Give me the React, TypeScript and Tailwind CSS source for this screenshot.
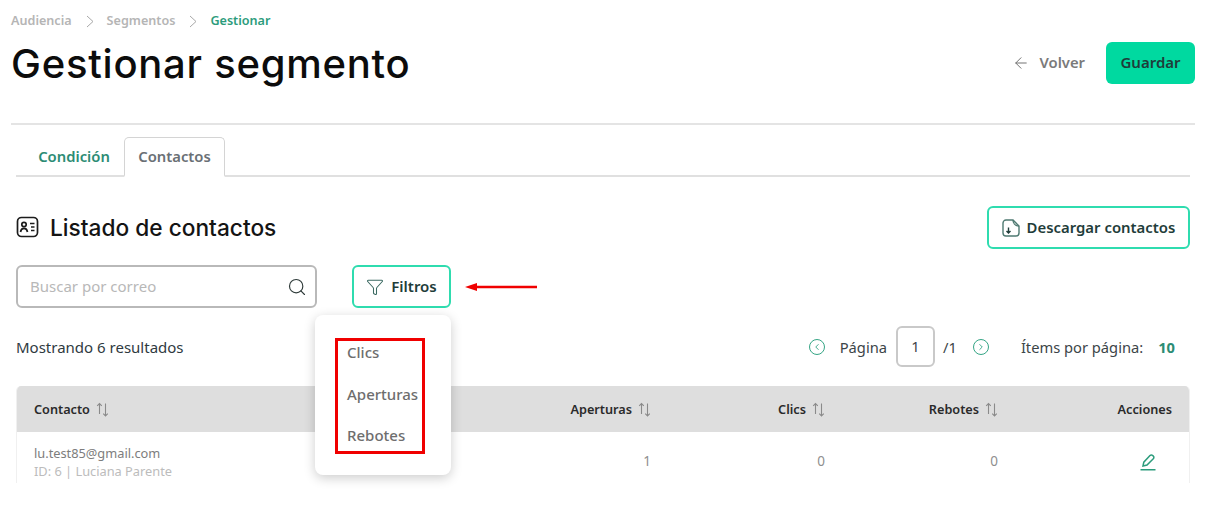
import * as React from "react";
import { ArrowLeft, ChevronLeft, ChevronRight, Funnel, Search } from "lucide-react";

const BODY = "font-['Noto_Sans','Open_Sans',sans-serif]";
const HEADING = "font-['Inter','Lato',sans-serif]";
const OUTLINE =
  "flex h-[43px] items-center justify-center rounded-[6px] border-2 border-[#2fdcaf] bg-white font-semibold text-[#1f3d3a]";
const TABLE_COLS = "grid grid-cols-[443px_174px_174px_173px_174px] items-center pl-[17px]";

function SortIcon(): React.JSX.Element {
  return (
    <svg width="13" height="15" viewBox="0 0 13 15" fill="none" stroke="#8a8a8a" strokeWidth="1.1" className="ml-[6px]">
      <path d="M3.500 12V1.500M1.200 3.800 3.500 1.500 5.800 3.800" />
      <path d="M9.500 1.500V14M7.200 11.700 9.500 14l2.300-2.300" />
    </svg>
  );
}

function Crumb(): React.JSX.Element {
  return (
    <svg width="8" height="13" viewBox="0 0 8 13" fill="none" stroke="#a8a8a8" strokeWidth="1" className="ml-[14px] mr-[13px]">
      <path d="M1 1l6 5.500L1 12" />
    </svg>
  );
}

function ContactCardIcon(): React.JSX.Element {
  return (
    <svg width="23" height="22" viewBox="0 0 23 22" fill="none" stroke="#1c1c1c" strokeWidth="1.7">
      <rect x="1.500" y="1.500" width="20" height="19" rx="4" />
      <circle cx="8" cy="8.500" r="2.200" />
      <path d="M4.500 16c.4-2.400 1.800-3.600 3.500-3.600s3.100 1.200 3.500 3.600" />
      <path d="M14 7.500h4.500M15 11h3.500M15 14.500h3.500" />
    </svg>
  );
}

function FileDownloadIcon(): React.JSX.Element {
  return (
    <svg width="18" height="18" viewBox="0 0 18 18" fill="none" stroke="#4f7a72" strokeWidth="1.400">
      <path d="M11 1H4a3 3 0 0 0-3 3v10a3 3 0 0 0 3 3h10a3 3 0 0 0 3-3V7z" />
      <path d="M11 1c0 3 2 6 6 6" />
      <path d="M6.500 8.500v5M4.500 12l2 2 2-2" stroke="#1f3d3a" />
    </svg>
  );
}

function EditIcon(): React.JSX.Element {
  return (
    <svg width="16" height="18" viewBox="0 0 16 18" fill="none" stroke="#2c9c7c" strokeWidth="1.500">
      <path d="M3 13 3.800 9.200 10 2.500a1.900 1.900 0 0 1 2.700 0l.6.6a1.900 1.900 0 0 1 0 2.700L7 12.100z" />
      <path d="M0.500 16.800h15" />
    </svg>
  );
}

function CirclePager({ dir }: { dir: "left" | "right" }): React.JSX.Element {
  return (
    <span className="flex h-[16px] w-[16px] items-center justify-center rounded-full border-[1.5px] border-[#35a585] text-[#35a585]">
      {dir === "left" ? <ChevronLeft size={10} strokeWidth={2.2} /> : <ChevronRight size={10} strokeWidth={2.2} />}
    </span>
  );
}

function HeaderCell({ label, className = "" }: { label: string; className?: string }): React.JSX.Element {
  return (
    <div className={`flex items-center text-[12.700px] font-semibold text-[#2a2a2a] ${className}`}>
      {label}
      <SortIcon />
    </div>
  );
}

function ValueCell({ value }: { value: number }): React.JSX.Element {
  return <div className="text-right text-[13.500px] text-[#8f8f8f]">{value}</div>;
}

export default function App(): React.JSX.Element {
  return (
    <div className={`${BODY} relative h-[513px] w-[1207px] overflow-hidden bg-white pl-[11px] pr-[12px]`}>
      <nav className="mt-[13px] flex h-[16px] items-center text-[12.600px] font-semibold leading-none">
        <span className="text-[#b5b5b5]">Audiencia</span>
        <Crumb />
        <span className="text-[#b5b5b5]">Segmentos</span>
        <Crumb />
        <span className="text-[#2c9c7c]">Gestionar</span>
      </nav>

      <header className="mt-[13px] flex h-[42px] items-center justify-between">
        <h1 className={`${HEADING} pt-[2px] text-[40px] font-medium leading-none tracking-[0.75px] text-[#0c0c0c]`}>
          Gestionar segmento
        </h1>
        <div className="flex items-center">
          <ArrowLeft size={18} strokeWidth={1.300} className="text-[#6f6f6f]" />
          <span className="ml-[9px] pb-[2px] text-[14.800px] font-semibold text-[#7a7a7a]">Volver</span>
          <button className="ml-[21px] h-[42px] w-[89px] rounded-[6px] bg-[#00d9a0] pb-[2px] text-[15px] font-semibold text-[#1f3d3a]">
            Guardar
          </button>
        </div>
      </header>

      <div className="mt-[39px] h-[2px] bg-[#e4e4e4]" />

      <div className="mx-[5px] mt-[12px] flex h-[40px] items-end border-b-2 border-[#e0e0e0]">
        <span className="mb-[-2px] flex h-[39px] w-[108px] items-center justify-center pb-[2px] pl-[8px] text-[14.800px] font-semibold text-[#2c8c74]">
          Condición
        </span>
        <span className="mb-[-2px] flex h-[40px] w-[101px] items-center justify-center rounded-t-[5px] border border-b-2 border-[#d4d4d4] border-b-white bg-white text-[14.800px] font-semibold text-[#6a7075]">
          Contactos
        </span>
      </div>

      <div className="mx-[5px]">
        <section className="mt-[29px] flex h-[43px] items-center justify-between">
          <div className="flex items-center">
            <ContactCardIcon />
            <h2 className={`${HEADING} ml-[11px] pt-[2px] text-[22.700px] font-medium leading-none text-[#141414]`}>
              Listado de contactos
            </h2>
          </div>
          <button className={`${OUTLINE} w-[203px] gap-[7px] text-[14.900px]`}>
            <FileDownloadIcon />
            Descargar contactos
          </button>
        </section>

        <div className="mt-[16px] flex items-center">
          <div className="flex h-[43px] w-[301px] items-center justify-between rounded-[6px] border-2 border-[#b9b9b9] pl-[12px] pr-[8px]">
            <span className="text-[15px] text-[#b8b8b8]">Buscar por correo</span>
            <Search size={20} strokeWidth={1.400} className="text-[#2f3b3a]" />
          </div>
          <button className={`${OUTLINE} ml-[35px] w-[99px] gap-[7px] text-[15px]`}>
            <Funnel size={18} strokeWidth={1.400} className="text-[#3b6a62]" />
            Filtros
          </button>
          <svg width="72" height="10" viewBox="0 0 72 10" className="ml-[14px]">
            <path d="M0 5 12 1v2.800h60v2.400H12V9z" fill="#f00000" />
          </svg>
        </div>

        <div className="mt-[18px] flex h-[41px] items-center justify-between pr-[15px]">
          <span className="pt-[1px] text-[15px] text-[#2f3a3f]">Mostrando 6 resultados</span>
          <div className="flex items-center text-[14.700px] text-[#3c4548]">
            <CirclePager dir="left" />
            <span className="ml-[15px] pt-[1px]">Página</span>
            <span className="ml-[9px] flex h-[41px] w-[39px] items-center justify-center rounded-[6px] border-2 border-[#c9c9c9]">
              1
            </span>
            <span className="ml-[8px] pt-[1px]">/1</span>
            <span className="ml-[16px]"><CirclePager dir="right" /></span>
            <span className="ml-[32px] pt-[1px]">Ítems por página:</span>
            <span className="ml-[15px] pt-[1px] font-bold text-[#2c8c74]">10</span>
          </div>
        </div>

        <div className="mt-[19px] h-[97px] overflow-hidden rounded-t-[5px] border-x border-[#f0f0f0]">
          <div className={`${TABLE_COLS} h-[46px] bg-[#dedede] pt-[1px]`}>
            <HeaderCell label="Contacto" />
            <HeaderCell label="Aperturas" className="justify-end" />
            <HeaderCell label="Clics" className="justify-end" />
            <HeaderCell label="Rebotes" className="justify-end" />
            <div className="text-right text-[12.700px] font-semibold text-[#2a2a2a]">Acciones</div>
          </div>
          <div className={`${TABLE_COLS} h-[51px] pt-[8px]`}>
            <div className="text-[12.800px] leading-[18px]">
              <div className="text-[#7d7d7d]">lu.test85@gmail.com</div>
              <div className="text-[#bcbcbc]">ID: 6 | Luciana Parente</div>
            </div>
            <ValueCell value={1} />
            <ValueCell value={0} />
            <ValueCell value={0} />
            <div className="flex justify-end pr-[16px]">
              <EditIcon />
            </div>
          </div>
        </div>
      </div>

      <div className="absolute left-[315px] top-[315px] h-[160px] w-[136px] rounded-[8px] bg-white shadow-[0_3px_12px_rgba(0,0,0,0.2)]">
        <div className="absolute left-[20px] top-[23px] flex h-[116px] w-[90px] flex-col border-[3px] border-[#f00000] pl-[9px] text-[15px] font-medium leading-[19px] text-[#6e6e6e]">
          <span className="mt-[2px]">Clics</span>
          <span className="mt-[23px] whitespace-nowrap">Aperturas</span>
          <span className="mt-[22px]">Rebotes</span>
        </div>
      </div>
    </div>
  );
}
